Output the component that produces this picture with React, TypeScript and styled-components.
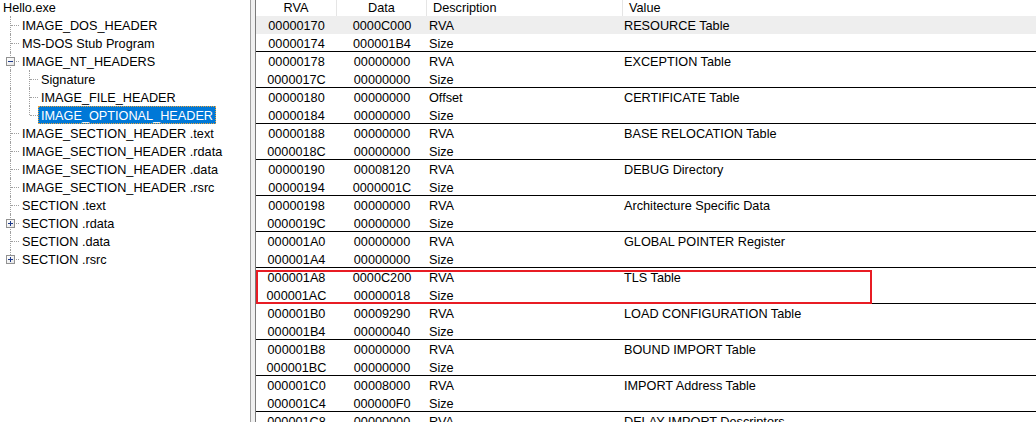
import React from 'react';
import styled, { createGlobalStyle, css } from 'styled-components';

const Global = createGlobalStyle`
  html, body { margin: 0; padding: 0; background: #fff; }
  body {
    font-family: "Liberation Sans", Arial, sans-serif;
    font-size: 12.7px;
    color: #000;
    overflow: hidden;
  }
  #root { width: 1036px; height: 422px; }
`;

const Window = styled.div`
  display: flex;
  width: 1036px;
  height: 422px;
  overflow: hidden;
  background: #fff;
`;

/* ---------- Tree ---------- */

const TreePane = styled.div`
  width: 250px;
  flex: none;
  overflow: hidden;
`;

const TreeList = styled.ul`
  list-style: none;
  margin: -2px 0 0;
  padding: 0;
`;

const TreeRow = styled.li`
  display: flex;
  align-items: flex-start;
  height: 18px;
  white-space: nowrap;
`;

type Conn = 'tee' | 'elbow' | 'pipe' | 'blank';

const Connector = styled.span<{ $kind: Conn }>`
  position: relative;
  flex: none;
  width: 19px;
  height: 18px;
  ${(p) =>
    p.$kind !== 'blank' &&
    css`
      &::before {
        content: '';
        position: absolute;
        left: 10px;
        top: 0;
        height: ${p.$kind === 'elbow' ? '9px' : '18px'};
        border-left: 1px dotted #a0a0a0;
      }
    `}
  ${(p) =>
    (p.$kind === 'tee' || p.$kind === 'elbow') &&
    css`
      &::after {
        content: '';
        position: absolute;
        left: 11px;
        top: 9px;
        width: 8px;
        border-top: 1px dotted #a0a0a0;
      }
    `}
`;

const Expander = styled.span<{ $open: boolean }>`
  position: absolute;
  z-index: 1;
  left: 6px;
  top: 5px;
  width: 9px;
  height: 9px;
  box-sizing: border-box;
  border: 1px solid #919191;
  background: linear-gradient(135deg, #ffffff 0%, #e6e6e6 100%);
  &::before {
    content: '';
    position: absolute;
    left: 1px;
    top: 3px;
    width: 5px;
    height: 1px;
    background: #1e3a8a;
  }
  ${(p) =>
    !p.$open &&
    css`
      &::after {
        content: '';
        position: absolute;
        left: 3px;
        top: 1px;
        width: 1px;
        height: 5px;
        background: #1e3a8a;
      }
    `}
`;

const Label = styled.span<{ $selected?: boolean }>`
  display: inline-block;
  height: 18px;
  box-sizing: border-box;
  line-height: 18px;
  padding: 0 2px;
  border: 1px dotted transparent;
  overflow: hidden;
  ${(p) =>
    p.$selected &&
    css`
      background: #0078d7;
      color: #fff;
      border-color: #e8a33d;
    `}
`;

type TreeItem = {
  label: string;
  conns: Conn[];
  expander?: 'open' | 'closed';
  selected?: boolean;
};

const treeItems: TreeItem[] = [
  { label: 'Hello.exe', conns: [] },
  { label: 'IMAGE_DOS_HEADER', conns: ['tee'] },
  { label: 'MS-DOS Stub Program', conns: ['tee'] },
  { label: 'IMAGE_NT_HEADERS', conns: ['tee'], expander: 'open' },
  { label: 'Signature', conns: ['pipe', 'tee'] },
  { label: 'IMAGE_FILE_HEADER', conns: ['pipe', 'tee'] },
  { label: 'IMAGE_OPTIONAL_HEADER', conns: ['pipe', 'elbow'], selected: true },
  { label: 'IMAGE_SECTION_HEADER .text', conns: ['tee'] },
  { label: 'IMAGE_SECTION_HEADER .rdata', conns: ['tee'] },
  { label: 'IMAGE_SECTION_HEADER .data', conns: ['tee'] },
  { label: 'IMAGE_SECTION_HEADER .rsrc', conns: ['tee'] },
  { label: 'SECTION .text', conns: ['tee'] },
  { label: 'SECTION .rdata', conns: ['tee'], expander: 'closed' },
  { label: 'SECTION .data', conns: ['tee'] },
  { label: 'SECTION .rsrc', conns: ['elbow'], expander: 'closed' },
];

/* ---------- Splitter ---------- */

const Splitter = styled.div`
  flex: none;
  width: 6px;
  box-sizing: border-box;
  border-left: 1px solid #a0a0a0;
  border-right: 1px solid #7a7a7a;
  background: #f0f0f0;
`;

/* ---------- List ---------- */

const COLS = '81px 90px 196px 1fr';

const ListPane = styled.div`
  flex: 1;
  min-width: 0;
  display: flex;
  flex-direction: column;
  overflow: hidden;
`;

const HeaderRow = styled.div`
  display: grid;
  grid-template-columns: ${COLS};
  height: 16px;
  line-height: 17px;
  flex: none;
  overflow: hidden;
  background: #fff;
`;

const HeaderCell = styled.div<{ $center?: boolean; $last?: boolean }>`
  box-sizing: border-box;
  padding: 0 6px;
  white-space: nowrap;
  overflow: hidden;
  text-align: ${(p) => (p.$center ? 'center' : 'left')};
  border-right: ${(p) => (p.$last ? 'none' : '1px solid #e5e5e5')};
`;

const Group = styled.div<{ $marked?: boolean }>`
  position: relative;
  flex: none;
  box-shadow: inset 0 -1px 0 #000;
  ${(p) =>
    p.$marked &&
    css`
      &::after {
        content: '';
        position: absolute;
        left: 0;
        top: 2px;
        width: 616px;
        height: 34px;
        box-sizing: border-box;
        border: 2px solid #e81c24;
      }
    `}
`;

const DataRow = styled.div<{ $hot?: boolean }>`
  display: grid;
  grid-template-columns: ${COLS};
  height: 18px;
  box-sizing: border-box;
  padding-top: 1px;
  line-height: 18px;
  white-space: nowrap;
  overflow: hidden;
  background: ${(p) => (p.$hot ? '#eeeeee' : 'transparent')};
`;

const Cell = styled.div<{ $center?: boolean; $pad?: number }>`
  overflow: hidden;
  text-align: ${(p) => (p.$center ? 'center' : 'left')};
  padding-left: ${(p) => p.$pad ?? 0}px;
`;

type Entry = { off: string; rva: string; size: string; kind: string; name: string };

const entries: Entry[] = [
  { off: '00000170', rva: '0000C000', size: '000001B4', kind: 'RVA', name: 'RESOURCE Table' },
  { off: '00000178', rva: '00000000', size: '00000000', kind: 'RVA', name: 'EXCEPTION Table' },
  { off: '00000180', rva: '00000000', size: '00000000', kind: 'Offset', name: 'CERTIFICATE Table' },
  { off: '00000188', rva: '00000000', size: '00000000', kind: 'RVA', name: 'BASE RELOCATION Table' },
  { off: '00000190', rva: '00008120', size: '0000001C', kind: 'RVA', name: 'DEBUG Directory' },
  { off: '00000198', rva: '00000000', size: '00000000', kind: 'RVA', name: 'Architecture Specific Data' },
  { off: '000001A0', rva: '00000000', size: '00000000', kind: 'RVA', name: 'GLOBAL POINTER Register' },
  { off: '000001A8', rva: '0000C200', size: '00000018', kind: 'RVA', name: 'TLS Table' },
  { off: '000001B0', rva: '00009290', size: '00000040', kind: 'RVA', name: 'LOAD CONFIGURATION Table' },
  { off: '000001B8', rva: '00000000', size: '00000000', kind: 'RVA', name: 'BOUND IMPORT Table' },
  { off: '000001C0', rva: '00008000', size: '000000F0', kind: 'RVA', name: 'IMPORT Address Table' },
  { off: '000001C8', rva: '00000000', size: '00000000', kind: 'RVA', name: 'DELAY IMPORT Descriptors' },
];

const nextOffset = (off: string) =>
  (parseInt(off, 16) + 4).toString(16).toUpperCase().padStart(8, '0');

export default function App() {
  return (
    <>
      <Global />
      <Window>
        <TreePane>
          <TreeList>
            {treeItems.map((item) => (
              <TreeRow key={item.label}>
                {item.conns.map((c, i) => (
                  <Connector key={i} $kind={c}>
                    {i === item.conns.length - 1 && item.expander && (
                      <Expander $open={item.expander === 'open'} />
                    )}
                  </Connector>
                ))}
                <Label $selected={item.selected}>{item.label}</Label>
              </TreeRow>
            ))}
          </TreeList>
        </TreePane>
        <Splitter />
        <ListPane>
          <HeaderRow>
            <HeaderCell $center>RVA</HeaderCell>
            <HeaderCell $center>Data</HeaderCell>
            <HeaderCell>Description</HeaderCell>
            <HeaderCell $last>Value</HeaderCell>
          </HeaderRow>
          {entries.map((e, i) => (
            <Group key={e.off} $marked={e.name === 'TLS Table'}>
              <DataRow $hot={i === 0}>
                <Cell $center>{e.off}</Cell>
                <Cell $center>{e.rva}</Cell>
                <Cell $pad={2}>{e.kind}</Cell>
                <Cell $pad={1}>{e.name}</Cell>
              </DataRow>
              <DataRow>
                <Cell $center>{nextOffset(e.off)}</Cell>
                <Cell $center>{e.size}</Cell>
                <Cell $pad={2}>Size</Cell>
                <Cell $pad={1} />
              </DataRow>
            </Group>
          ))}
        </ListPane>
      </Window>
    </>
  );
}
